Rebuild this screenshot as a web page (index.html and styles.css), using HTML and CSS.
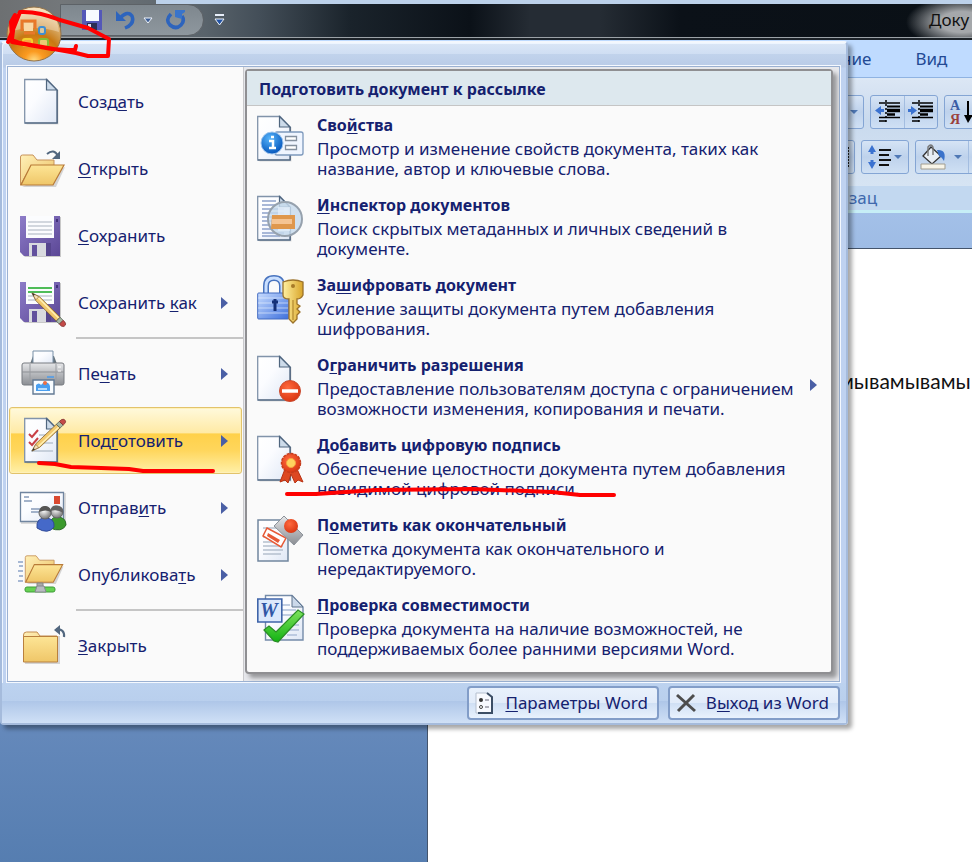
FILE: index.html
```html
<!DOCTYPE html>
<html lang="ru">
<head>
<meta charset="utf-8">
<title>Word</title>
<link rel="stylesheet" href="styles.css">
</head>
<body>
<svg class="defs" width="0" height="0" aria-hidden="true">
  <defs>
    <linearGradient id="paper" x1="0" y1="0" x2="1" y2="1"><stop offset="0" stop-color="#fff"/><stop offset=".4" stop-color="#fbfcff"/><stop offset="1" stop-color="#dfe7f5"/></linearGradient>
    <linearGradient id="folderBack" x1="0" y1="0" x2="1" y2="1"><stop offset="0" stop-color="#fff0b8"/><stop offset="1" stop-color="#ecc062"/></linearGradient>
    <linearGradient id="folderFront" x1="0" y1="0" x2="0" y2="1"><stop offset="0" stop-color="#fde596"/><stop offset="1" stop-color="#efc668"/></linearGradient>
    <linearGradient id="violet" x1="0" y1="0" x2="1" y2="1"><stop offset="0" stop-color="#8d7cc8"/><stop offset="1" stop-color="#5b4796"/></linearGradient>
    <linearGradient id="metal" x1="0" y1="0" x2="0" y2="1"><stop offset="0" stop-color="#e6e7e9"/><stop offset=".5" stop-color="#b6b8bc"/><stop offset="1" stop-color="#8b8e93"/></linearGradient>
    <linearGradient id="lock" x1="0" y1="0" x2="1" y2="1"><stop offset="0" stop-color="#c7dcff"/><stop offset="1" stop-color="#3d6fdc"/></linearGradient>
    <linearGradient id="gold" x1="0" y1="0" x2="1" y2="0"><stop offset="0" stop-color="#fff0a0"/><stop offset="1" stop-color="#d9a52a"/></linearGradient>
    <linearGradient id="check" x1="0" y1="0" x2="0" y2="1"><stop offset="0" stop-color="#7fe25e"/><stop offset="1" stop-color="#12b212"/></linearGradient>
    <radialGradient id="info" cx=".4" cy=".3" r=".7"><stop offset="0" stop-color="#57b5fb"/><stop offset="1" stop-color="#0757bd"/></radialGradient>
    <radialGradient id="red" cx=".4" cy=".35" r=".7"><stop offset="0" stop-color="#ff6a3e"/><stop offset="1" stop-color="#d83410"/></radialGradient>
    <radialGradient id="orb" cx=".5" cy="1" r="1"><stop offset="0" stop-color="#ffe08a"/><stop offset=".18" stop-color="#fb9a20"/><stop offset=".5" stop-color="#c87812"/><stop offset=".65" stop-color="#d29a4c"/><stop offset="1" stop-color="#f7dfb2"/></radialGradient>
    <radialGradient id="face" cx=".4" cy=".3" r=".7"><stop offset="0" stop-color="#fff"/><stop offset="1" stop-color="#777"/></radialGradient>
    <g id="sheet">
      <path d="M1 1.500h22l10 10.500v33H1z" fill="#000" opacity=".12" transform="translate(1.500 1.500)"/>
      <path d="M.7 1.500H23L33 12v33H.7z" fill="url(#paper)" stroke="#8193aa" stroke-width="1.300"/>
      <path d="M33.200 12v33H1" fill="none" stroke="#4b6079" stroke-width="1.200"/>
      <path d="M22.500 1.500V12H33z" fill="#cddbea" stroke="#50667f" stroke-width="1.200"/>
    </g>
    <g id="floppy">
      <path d="M3 5h39v40H6l-3-3z" fill="#000" opacity=".2"/>
      <path d="M1 4h40v40H5l-4-4z" fill="url(#violet)"/>
      <path d="M7 4h28v22H7z" fill="#fbfcfe"/>
      <path d="M9 10h24M9 14h24M9 18h24M9 22h24" stroke="#c5cad4" stroke-width="1.400"/>
      <path d="M10 31h22v13H10z" fill="#d9dadf"/><path d="M13 33h5v11h-5z" fill="#62509d"/><path d="M27 31h5v13h-5z" fill="#56458d"/>
      <path d="M37 7h2v3h-2z" fill="#41307a"/>
    </g>
    <g id="pencil">
      <path d="M0 0L10 5 37 32 32 37 5 10z" fill="#f3ca6e" stroke="#7b5a24"/>
      <path d="M8 6L35 33" stroke="#fff0b4" stroke-width="2"/>
      <path d="M0 0l9 5-4 4z" fill="#f5dfb8" stroke="#876233" stroke-width=".8"/><path d="M0 0l4 2-2 2z" fill="#333"/>
      <path d="M37 32l4 4-5 5-4-4z" fill="#a8b8a4" stroke="#4f5b51"/><path d="M41 36q6 5 1 8-3 1-6-3z" fill="#c34a47" stroke="#7c2c2c"/>
    </g>
    <g id="openFolder">
      <path d="M3 42h34L46 22z" fill="#000" opacity=".15"/>
      <path d="M1.500 40V12q0-2 2-2H14l4 5h17v6H12z" fill="url(#folderBack)" stroke="#c7925a"/>
      <path d="M12 20h33L34 40H2z" fill="url(#folderFront)" stroke="#b87a37" stroke-width="1.200"/>
    </g>
    <g id="indentLines"><path d="M8 0v24" stroke="#000" stroke-width="1.500" stroke-dasharray="2 2"/><path d="M1 3h21M1 17.500h21M1 21h7" stroke="#000" stroke-width="1.600"/><path d="M9 6.500h13" stroke="#000" stroke-width="2"/><path d="M9 10.500h13" stroke="#000" stroke-width="3.500"/><path d="M9 14.500h8" stroke="#000" stroke-width="2.500"/></g>
  </defs>
</svg>

<div class="app">
  <header class="titlebar">
    <div class="quick">
      <button class="tool" aria-label="Сохранить"><svg width="22" height="22" viewBox="0 0 22 22"><path d="M1 1h20v20H1z" fill="#5458b8"/><path d="M5 1h13v11H5z" fill="#f8fbff"/><path d="M6 14h10v7H6z" fill="#2b2e55"/><path d="M7 15h3v3H7z" fill="#dde"/></svg></button>
      <button class="tool" aria-label="Отменить"><svg width="20" height="22" viewBox="0 0 20 22"><path d="M5 9q8-8 12-2 3 8-7 12" fill="none" stroke="#2d64bd" stroke-width="3.500"/><path d="M1 2v10h10z" fill="#2d64bd"/></svg></button>
      <button class="tool drop" aria-label="Список отмены"><svg width="10" height="8" viewBox="0 0 10 8"><path d="M1 2h8L5 7z" fill="#3c5e96" stroke="#eef3fa"/></svg></button>
      <button class="tool" aria-label="Повторить"><svg width="22" height="22" viewBox="0 0 22 22"><path d="M6 5q-6 6-1 11 6 5 11 0 4-4 1-9" fill="none" stroke="#2d64bd" stroke-width="3.600"/><path d="M10 1h10v2l-3 2v5l-7-2z" fill="#3974cb"/></svg></button>
    </div>
    <button class="tool more" aria-label="Настройка панели"><svg width="12" height="12" viewBox="0 0 12 12"><path d="M1 1h9" stroke="#e8effa" stroke-width="2"/><path d="M1 5h9L5.500 11z" fill="#2454a4" stroke="#eef3fa"/></svg></button>
    <span class="caption">Доку</span>
  </header>
  <nav class="tabs"><a href="#t1">ние</a><a href="#t2">Вид</a></nav>
  <section class="ribbon">
    <div class="tools">
      <div class="group g1"><button aria-label="Список"><svg width="10" height="6"><path d="M1 1h8L5 5z" fill="#4f78b5"/></svg></button></div>
      <div class="group"><button aria-label="Уменьшить отступ"><svg width="26" height="24" viewBox="0 0 26 24"><g transform="translate(3)"><use href="#indentLines"/></g><path d="M9 10.500H4" stroke="#3b72d0" stroke-width="3"/><path d="M0 10.500l6-4.500v9z" fill="#3b72d0"/></svg></button><button aria-label="Увеличить отступ"><svg width="26" height="24" viewBox="0 0 26 24"><g transform="translate(3)"><use href="#indentLines"/></g><path d="M0 10.500h5" stroke="#3b72d0" stroke-width="3"/><path d="M9 10.500L3 6v9z" fill="#3b72d0"/></svg></button></div>
      <div class="group"><button class="sort" aria-label="Сортировка"><svg width="28" height="28" viewBox="0 0 28 28"><text x="2" y="12" class="glyph blue">А</text><text x="2" y="26" class="glyph brown">Я</text><path d="M20 3v16" stroke="#000" stroke-width="2"/><path d="M16 17h9l-5 8z"/></svg></button></div>
    </div>
    <div class="tools">
      <div class="group g2"><button aria-label="Выравнивание"><svg width="4" height="20"><path d="M2 0v20" stroke="#222" stroke-width="2" stroke-dasharray="2 1"/></svg></button></div>
      <div class="group"><button class="wide" aria-label="Интервал"><svg width="36" height="26" viewBox="0 0 36 26"><path d="M5 6v4M5 16v4" stroke="#3b72d0" stroke-width="3"/><path d="M1 8l4-7 4 7zM1 18l4 7 4-7z" fill="#3b72d0"/><path d="M12 6h12M12 11h10M12 16h12M12 21h10" stroke="#111" stroke-width="2"/><path d="M27 11h8l-4 4z" fill="#4f78b5"/></svg></button></div>
      <div class="group"><button class="fill" aria-label="Заливка"><svg width="44" height="26" viewBox="0 0 44 26"><path d="M11 3l10 9-9 8-9-8z" fill="#e8eef5" stroke="#333" stroke-width="1.300"/><path d="M8 12V3q3-4 5 0v8" fill="none" stroke="#777" stroke-width="1.400"/><path d="M17 6q10-1 7 11-2-4-5-5z" fill="#3972cb"/><path d="M1 20h24v5H1z" fill="#f7f4e8" stroke="#a19d90"/><path d="M34 11h8l-4 4z" fill="#4f78b5"/></svg></button><button aria-label="Границы"></button></div>
    </div>
    <h2 class="groupname">зац</h2>
  </section>
  <main class="workspace"><article class="page"><p>мывамывамы</p></article></main>

  <div class="menu">
    <div class="menubody">
      <nav class="commands">
        <button class="cmd"><svg class="ico" viewBox="0 0 48 48"><g transform="translate(5)"><use href="#sheet"/></g></svg><span>Созд<u>а</u>ть</span></button>
        <button class="cmd"><svg class="ico" viewBox="0 0 48 48"><use href="#openFolder"/><path d="M28 9q7-6 11 2" fill="none" stroke="#52677f" stroke-width="2"/><path d="M41 6v8h-8z" fill="#52677f"/></svg><span><u>О</u>ткрыть</span></button>
        <button class="cmd"><svg class="ico" viewBox="0 0 48 48"><use href="#floppy"/></svg><span><u>С</u>охранить</span></button>
        <button class="cmd"><svg class="ico" viewBox="0 0 48 48"><g transform="translate(0 -1)"><use href="#floppy"/><path d="M9 10h24M9 14h24" stroke="#24b52e" stroke-width="1.600"/></g><g transform="translate(13 14) scale(.76)"><use href="#pencil"/></g></svg><span>Сохранить <u>к</u>ак</span><svg class="arrow" viewBox="0 0 7 12"><path d="M0 0l7 6-7 6z"/></svg></button>
        <hr>
        <button class="cmd"><svg class="ico" viewBox="0 0 48 48"><path d="M11 14l3-8h21l3 8z" fill="#66737c"/><path d="M14 1h20v14H14z" fill="url(#paper)" stroke="#7890a8"/><path d="M3 15q0-2 2-2h38q2 0 2 2v18q0 2-2 2H5q-2 0-2-2z" fill="url(#metal)" stroke="#777b80"/><path d="M3 22h42" stroke="#8c8f94"/><path d="M11 14v20M37 14v20" stroke="#999ca1"/><path d="M39 17h3M39 21h3" stroke="#fff"/><path d="M28 27h7" stroke="#4b9bed" stroke-width="1.500"/><path d="M14 30h21v14H14z" fill="#f8fcff" stroke="#637a94" stroke-width="1.400"/><path d="M17 41v-6q3-3 5 0l3-3q5 0 6 4v5z" fill="#4a9ff0"/><circle cx="26" cy="33" r="2" fill="#ef7043"/><path d="M19 39h9" stroke="#dff0ff" stroke-width="1.500"/></svg><span>Пе<u>ч</u>ать</span><svg class="arrow" viewBox="0 0 7 12"><path d="M0 0l7 6-7 6z"/></svg></button>
        <button class="cmd selected"><svg class="ico" viewBox="0 0 48 48"><g transform="translate(5)"><use href="#sheet"/></g><path d="M20 18h14M20 26h14M12 34h22" stroke="#b9c4d1" stroke-width="1.400"/><path d="M10 17l3 3 6-7M10 25l3 3 6-7" fill="none" stroke="#c84046" stroke-width="2"/><g transform="translate(13 34) scale(.76 -.72)"><use href="#pencil"/></g></svg><span>Под<u>г</u>отовить</span><svg class="arrow" viewBox="0 0 7 12"><path d="M0 0l7 6-7 6z"/></svg></button>
        <button class="cmd"><svg class="ico" viewBox="0 0 48 48"><path d="M2 9h45v31H2z" opacity=".12"/><path d="M1.500 8.500h43v29h-43z" fill="url(#paper)" stroke="#70859f" stroke-width="1.300"/><path d="M5 13h5M5 17h8M12 25h10M12 28h8" stroke="#879bb9" stroke-width="1.300"/><path d="M35 12h6v8h-6z" fill="#da4931"/><path d="M31 44q-1-11 7-11 9 0 9 8-4 8-16 3z" fill="#3b9a2c" stroke="#2f6d2b"/><circle cx="38" cy="28" r="6" fill="url(#face)" stroke="#666"/><path d="M31 27q2-7 8-5 6 1 5 7-5-4-13-2z" fill="#636363"/><path d="M18 44q-1-10 8-10 10 0 9 9-6 8-17 1z" fill="#4569c9" stroke="#304a97"/><circle cx="26" cy="29" r="6" fill="url(#face)" stroke="#666"/><path d="M20 28q1-7 7-6 5 1 5 6-5-3-12 0z" fill="#555"/></svg><span>Отправ<u>и</u>ть</span><svg class="arrow" viewBox="0 0 7 12"><path d="M0 0l7 6-7 6z"/></svg></button>
        <button class="cmd"><svg class="ico" viewBox="0 0 48 48"><path d="M-1 11h5M0 15h4M-1 20h5M0 25h4M-1 30h5" stroke="#8ca3c7" stroke-width="1.300"/><g transform="translate(5 -4) scale(.86 .88)"><use href="#openFolder"/></g><path d="M18 32h6v7h-6z" fill="#aaa" stroke="#888"/><rect x="6" y="36" width="30" height="5" rx="2" fill="#66d252" stroke="#3f9c38"/><path d="M18 35h7l2 6H16z" fill="#b8bbc0" stroke="#85888e"/></svg><span>Опубликова<u>т</u>ь</span><svg class="arrow" viewBox="0 0 7 12"><path d="M0 0l7 6-7 6z"/></svg></button>
        <hr>
        <button class="cmd"><svg class="ico" viewBox="0 0 48 48"><path d="M6 14h35v28H6z" opacity=".15"/><path d="M4.500 38V13q0-3 3-3H18l3 4h17v8z" fill="url(#folderBack)" stroke="#c28c50"/><path d="M4.500 14.500h34V40h-34z" fill="url(#folderFront)" stroke="#b9803e"/><path d="M45 15q1-8-8-8" fill="none" stroke="#52677f" stroke-width="2.200"/><path d="M35 8l6-5v10z" fill="#52677f"/></svg><span><u>З</u>акрыть</span></button>
      </nav>
      <section class="pane">
        <h2>Подготовить документ к рассылке</h2>
        <div class="options">
          <button class="opt"><svg class="ico" viewBox="0 0 48 48"><use href="#sheet"/><rect x="18" y="17" width="28" height="23" rx="2" fill="#eff5ff" stroke="#7c98bc" stroke-width="1.300"/><path d="M28.500 21.500h11v4h-11zM28.500 30.500h11v4h-11z" fill="#fff" stroke="#84909f" stroke-width="1.300"/><circle cx="15" cy="28" r="11" fill="url(#info)" stroke="#9fc5ed"/><path d="M12 26h4v7M12 33h7M14 22h3" stroke="#fff" stroke-width="2.500" fill="none"/></svg><span class="txt"><strong>Сво<u>й</u>ства</strong><span>Просмотр и изменение свойств документа, таких как<br>название, автор и ключевые слова.</span></span></button>
          <button class="opt"><svg class="ico" viewBox="0 0 48 48"><use href="#sheet"/><path d="M5 6h14M5 10h14M5 14h22M5 18h22M5 22h22M5 26h22M5 30h22M5 34h22M5 38h22M5 41h18" stroke="#8da1ca" stroke-width="1.300"/><circle cx="28" cy="24" r="17" fill="#c7daed" fill-opacity=".82" stroke="#96a1ad" stroke-width="2"/><path d="M21 12h12v24H21z" fill="#e6f0fb" opacity=".7"/><path d="M15 20h23v14H14z" fill="#df974c"/><path d="M15 24h20v5H15z" fill="#f5c493"/></svg><span class="txt"><strong><u>И</u>нспектор документов</strong><span>Поиск скрытых метаданных и личных сведений в<br>документе.</span></span></button>
          <button class="opt"><svg class="ico" viewBox="0 0 48 48"><path d="M9 20V11q0-8 8-8t8 8v9" fill="none" stroke="#4974bf" stroke-width="6"/><path d="M9 20V11q0-8 8-8t8 8v9" fill="none" stroke="#c9dfff" stroke-width="3"/><rect x=".7" y="18" width="31" height="26" rx="1" fill="url(#lock)" stroke="#426ac0"/><path d="M1 23h30M1 28h30M1 33h30M1 38h30" stroke="#eef5ff" opacity=".6"/><path d="M18 24v12M15 27h6" stroke="#143078" stroke-width="3"/><path d="M26 7q10-4 20 0v13q-2 4-6 4v5l3 2-3 3 3 3-3 3v4l-4 4-4-4V24q-6 0-6-4z" fill="url(#gold)" stroke="#9b722a" stroke-width="1.300"/><circle cx="36" cy="11" r="2" fill="#a77a28"/><path d="M36 25v20" stroke="#a57b22"/></svg><span class="txt"><strong>За<u>ш</u>ифровать документ</strong><span>Усиление защиты документа путем добавления<br>шифрования.</span></span></button>
          <button class="opt"><svg class="ico" viewBox="0 0 48 48"><use href="#sheet"/><circle cx="33" cy="36" r="10.500" fill="url(#red)" stroke="#ca4c31"/><path d="M25 36h16" stroke="#fff" stroke-width="3.500"/></svg><span class="txt"><strong>О<u>г</u>раничить разрешения</strong><span>Предоставление пользователям доступа с ограничением<br>возможности изменения, копирования и печати.</span></span><svg class="arrow" viewBox="0 0 7 12"><path d="M0 0l7 6-7 6z"/></svg></button>
          <button class="opt"><svg class="ico" viewBox="0 0 48 48"><use href="#sheet"/><path d="M28 34l-5 13 5-2 3 3 3-9 4 9 3-3 5 2-6-13z" fill="#dd4822" stroke="#b83214"/><circle cx="34" cy="28" r="9.500" fill="url(#red)" stroke="#c63d1d" stroke-width="1.500" stroke-dasharray="3 1"/><circle cx="34" cy="28" r="4.500" fill="#ffd35e" stroke="#f6a540"/></svg><span class="txt"><strong>До<u>б</u>авить цифровую подпись</strong><span>Обеспечение целостности документа путем добавления<br>невидимой цифровой подписи.</span></span></button>
          <button class="opt"><svg class="ico" viewBox="0 0 48 48"><path d="M1 5h30v41H1z" fill="url(#paper)" stroke="#71869f" stroke-width="1.500"/><path d="M6 13h20M6 22h20M6 27h20M6 31h20M6 35h20M6 39h18" stroke="#b5c0ce" stroke-width="1.300"/><path d="M10 13l19 10-5 9L6 21z" fill="#fff" stroke="#e75936" stroke-width="1.500"/><path d="M11 18l12 7-2 3-11-7z" fill="#e75936"/><path d="M27 1L17 11l20 19 9-10z" fill="url(#metal)" stroke="#8c929a"/><circle cx="34" cy="11" r="7" fill="url(#red)"/></svg><span class="txt"><strong>П<u>о</u>метить как окончательный</strong><span>Пометка документа как окончательного и<br>нередактируемого.</span></span></button>
          <button class="opt"><svg class="ico" viewBox="0 0 48 48"><path d="M8.500.5H35L46 12v33H8.500z" fill="url(#paper)" stroke="#748ba9" stroke-width="1.400"/><path d="M35 .5V12h11z" fill="#cbd9ea" stroke="#5c728b"/><path d="M25 10h8M25 15h14M25 20h14M30 30h12M30 35h12M30 40h10" stroke="#aebfd9" stroke-width="1.300"/><path d="M.8 4h24v23H.8z" fill="#dce9fc" stroke="#3f64a9" stroke-width="1.600"/><text x="3" y="22" class="glyph word">W</text><path d="M7 35l5-4 7 6L41 15l6 4-26 28-4-1z" fill="url(#check)" stroke="#2a8d25" stroke-width="1.200"/></svg><span class="txt"><strong><u>П</u>роверка совместимости</strong><span>Проверка документа на наличие возможностей, не<br>поддерживаемых более ранними версиями Word.</span></span></button>
        </div>
      </section>
    </div>
    <footer class="menufoot">
      <button class="foot"><svg width="20" height="22" viewBox="0 0 20 22"><path d="M1 1h12l4 4v16H1z" fill="#f8faff" stroke="#b5bfce"/><path d="M12 1l5 4v16H3" fill="none" stroke="#3c4e65" stroke-width="2"/><circle cx="6" cy="8" r="2" fill="#333"/><circle cx="6" cy="15" r="1.500" fill="#fff" stroke="#444"/><path d="M10 8h4M10 15h4" stroke="#667"/></svg><span><u>П</u>араметры Word</span></button>
      <button class="foot"><svg width="20" height="20" viewBox="0 0 20 20"><path d="M1 2l18 16M18 2L2 18" stroke="#4d4d4d" stroke-width="3"/></svg><span>В<u>ы</u>ход из Word</span></button>
    </footer>
  </div>

  <button class="orb" aria-label="Кнопка Office"><svg width="56" height="58" viewBox="0 0 56 58"><circle cx="28" cy="29" r="27" fill="url(#orb)" stroke="#92724a"/><path d="M3 27q2-23 25-24 23 1 25 24-25-8-50 0z" fill="#fff" opacity=".3"/><path d="M16 26V16h13v8M29 28H18" fill="none" stroke="#e8782a" stroke-width="3"/><path d="M18 18h9v8h-9z" fill="#f9d8a6"/><rect x="33" y="22" width="6" height="7" rx="2" fill="#d9c8a0" stroke="#3f8fd2" stroke-width="2"/><rect x="17" y="34" width="9" height="7" rx="2" fill="#f5a742" stroke="#f4d02d" stroke-width="2"/><rect x="33" y="34" width="9" height="8" rx="2" fill="#eaca74" stroke="#86bd36" stroke-width="2"/></svg></button>
  <svg class="marks" width="640" height="520" viewBox="0 0 640 520" aria-hidden="true"><g fill="none" stroke="#f00" stroke-width="4" stroke-linecap="round" stroke-linejoin="round"><path d="M8 42L20 12Q38 11 60 20L88 28 109 39 108 56H88L76 53 20 43 12 40 11 22 15 15 12 39M12 42l40 7 16 1h7l1-4"/><path d="M39 463l16 1 16 3 30 1 28 1 14 2h70"/><path d="M287 494l29 0 60-4 96-1 80 3 28 3h34"/></g></svg>
</div>
</body>
</html>
```
FILE: styles.css
```css
* { box-sizing: border-box; }
body { margin: 0; font: 17px/20px "Noto Sans", "Open Sans", sans-serif; color: #15216f; }
button { font: inherit; color: inherit; background: none; border: 0; padding: 0; margin: 0; text-align: left; }
h2, p { margin: 0; }
u { text-underline-offset: 2px; text-decoration-thickness: 1px; text-decoration-skip-ink: none; }
.defs { position: absolute; }
.app { position: relative; display: flex; flex-direction: column; min-height: 100vh; overflow: hidden; }

.titlebar { display: flex; align-items: center; height: 40px; padding: 5px 0 3px 60px; border-bottom: 2px solid #1d2329; background: linear-gradient(90deg, transparent 156px, #bcd1ea 156px) 0 0 / 100% 4px no-repeat, radial-gradient(ellipse 56px 26px at calc(100% - 10px) 22px, #a5a8ab 40%, transparent) no-repeat, linear-gradient(90deg, #6d7072 0, #73777a 60px, #59636b 205px, #434e58 260px, #1a232b 350px, #0b1118 470px, #252c34 530px, #252c34 600px, #0b1118 680px, #0a1016 100%); box-shadow: inset 0 -1px #9ca2a7; }
.quick { display: flex; align-items: center; height: 32px; width: 144px; padding-left: 20px; gap: 12px; border: 1px solid #5d6267; border-radius: 0 16px 16px 0; background: linear-gradient(#7e878e, #8e979e); }
.tool { display: flex; }
.quick .drop { margin: 0 0 0 -4px; }
.more { margin-left: 10px; }
.caption { margin-left: auto; width: 43px; overflow: visible; white-space: nowrap; color: #111; }

.tabs { display: flex; align-items: center; gap: 44px; height: 38px; padding-left: 841px; background: #bfdbff; border-bottom: 1px solid #8fb3e2; }
.tabs a { color: #234a94; text-decoration: none; }
.ribbon { display: flex; flex-direction: column; height: 135px; padding: 15px 0 0 819px; gap: 11px; border-top: 2px solid #dce8f6; border-bottom: 3px solid #c6eef6; background: linear-gradient(#dbe6f4 0, #c9daee 40px, #d6e4f3 106px, #c2d8f0 106px, #c2d8f0 100%); }
.tools { display: flex; gap: 6px; }
.group { display: flex; height: 34px; flex: none; border: 1px solid #84a5d4; border-radius: 3px; background: linear-gradient(#d6e4f5, #bed2ec 50%, #cfe0f4); }
.group button { display: flex; align-items: center; justify-content: center; width: 33px; }
.group button + button { border-left: 1px solid #a3bde0; }
.g1 { width: 45px; justify-content: flex-end; }
.g1 button { width: 18px; }
.g2 { width: 36px; justify-content: flex-end; }
.g2 button { width: 12px; }
.group .wide { width: 46px; }
.group .fill { width: 52px; }
.groupname { padding-left: 30px; font-size: 17px; line-height: 26px; font-weight: 400; color: #4069ad; }
.glyph { font-family: "Liberation Serif", serif; font-size: 14px; font-weight: 700; }
.blue { fill: #3c5da5; } .brown { fill: #9b403b; }
.word { fill: #3157a6; font-size: 20px; font-style: italic; }

.workspace { flex: 1; min-height: 640px; padding: 35px 0 0 427px; background: linear-gradient(#a3c0e8, #86a8d6 200px, #6589bb 510px, #557db0 100%); }
.page { min-height: 620px; height: 100%; padding: 121px 0 0 411px; overflow: hidden; white-space: nowrap; background: #fff; border: solid #44546b; border-width: 1px 0 0 1px; color: #111; font: 21px/22px Lato, "Open Sans", sans-serif; }

.menu { position: absolute; top: 41px; left: 0; width: min(848px, 100%); padding: 23px 6px 0 5px; border: 2px solid #a5bbdc; border-top-color: #f3f7fd; border-radius: 4px; background: linear-gradient(#dae6f6 0, #cfdef3 11px, #c1d3ec 11px, #b9cbe7 24px, #bfd2f0 25px); box-shadow: inset 1px 1px #edf5ff, 4px 4px 4px rgba(0, 0, 0, .35); }
.menubody { display: flex; border: 1px solid #9bb1d2; outline: 1px solid #f5f9ff; background: #e7e8ec; }
.commands { flex: none; width: 236px; padding: 1px 1px 0 1px; background: #fafafa; border-right: 1px solid #c9c9cc; }
.commands hr { height: 2px; margin: 1px -1px 1px 67px; border: 0; background: #c5c5c5; }
.cmd { display: flex; align-items: center; width: 100%; height: 67px; padding: 0 13px 0 9px; border: 1px solid transparent; border-radius: 3px; }
.cmd span { flex: 1; padding-left: 11px; white-space: nowrap; }
.ico { flex: none; width: 48px; height: 48px; overflow: visible; }
.arrow { flex: none; width: 7px; height: 12px; fill: #4a5fa5; }
.selected { border-color: #e2c36b; background: linear-gradient(#fff9dc 0, #ffeaa5 38%, #ffd14a 40%, #ffd65c 65%, #fff0a8 100%); box-shadow: inset 0 0 0 1px #fff1b8; }
.pane { flex: 1; margin: 2px 6px 7px 1px; border: 2px solid #8f8f92; border-radius: 4px; background: #fafafa; box-shadow: 4px 4px 4px rgba(0, 0, 0, .35); }
.pane h2 { padding: 8px 12px 6px; font-size: 16px; line-height: 20px; font-weight: 700; color: #15216f; background: #dde8ee; border-bottom: 1px solid #c5c5c5; }
.options { display: flex; flex-direction: column; padding: 9px 14px 9px 10px; }
.opt { display: flex; align-items: flex-start; height: 80px; }
.opt:last-child { height: 68px; }
.opt .txt { display: flex; flex: 1; flex-direction: column; gap: 4px; padding-left: 12px; white-space: nowrap; }
.opt strong { font-size: 16px; font-weight: 700; line-height: 20px; }
.opt .arrow { align-self: center; margin-bottom: 20px; }
.menufoot { display: flex; justify-content: flex-end; gap: 9px; margin: 1px -6px 0 -5px; padding: 3px 6px; background: linear-gradient(#bcd2ef 0, #b9cfed 18px, #aec6e8 18px, #cfe0f6 100%); }
.foot { display: flex; align-items: center; height: 34px; padding: 0 9px 0 6px; gap: 10px; border: 2px solid #829dc8; border-radius: 4px; background: linear-gradient(#e9f1fc 0, #e1ebf9 50%, #cfdff4 50%, #e9f2fd 100%); }

.orb { position: absolute; top: 5px; left: 6px; }
.orb svg { display: block; }
.marks { position: absolute; top: 0; left: 0; pointer-events: none; }
```
